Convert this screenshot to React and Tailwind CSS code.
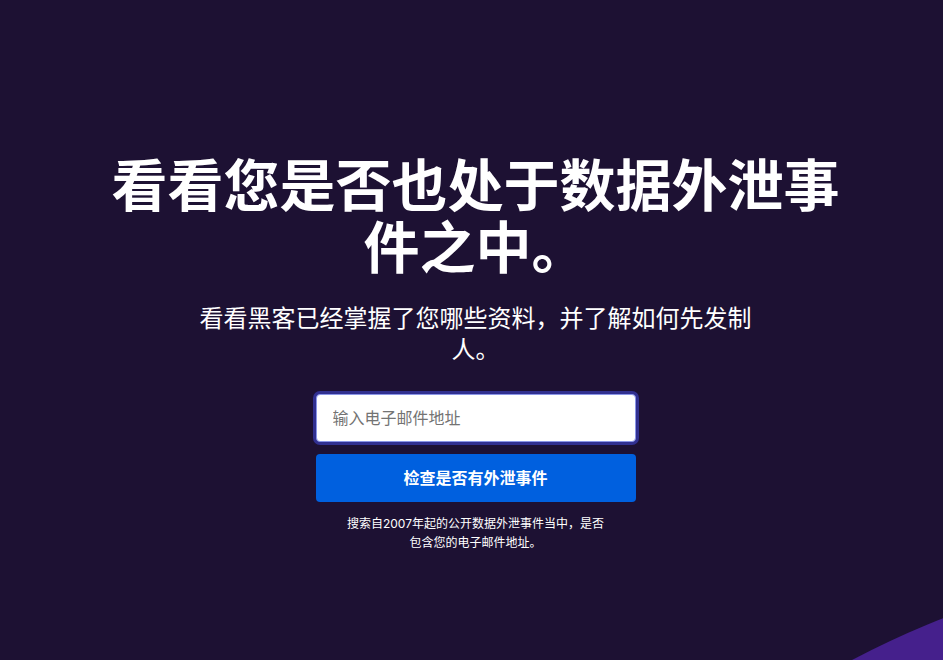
export default function App() {
  return (
    <main className="relative h-[660px] w-full overflow-hidden bg-[#1d1133] font-['Inter','Noto_Sans_CJK_SC',sans-serif] text-white">
      {/* decorative blob bottom-right */}
      <div className="pointer-events-none absolute left-[372px] top-[556px] h-[1800px] w-[1800px] rounded-full bg-[#45208c]" />

      <section className="relative flex flex-col items-center pl-5 pr-3 pt-[155px]">
        <h1 className="max-w-[760px] text-center text-[56px] font-bold leading-[62px]">
          看看您是否也处于数据外泄事件之中。
        </h1>
        <p className="mt-[24px] max-w-[565px] text-center text-[24px] leading-[31px]">
          看看黑客已经掌握了您哪些资料，并了解如何先发制人。
        </p>

        <form className="mt-[29px] flex w-[320px] flex-col" onSubmit={(e) => e.preventDefault()}>
          <input
            type="email"
            autoFocus
            placeholder="输入电子邮件地址"
            className="h-[48px] w-full rounded-[4px] border border-[#8a95e6] bg-white px-4 text-[16px] text-[#20123a] outline-none ring-[3px] ring-[#313090] placeholder:text-[#737373]"
          />
          <button
            type="submit"
            className="mt-[12px] h-[48px] w-full rounded-[4px] bg-[#0060df] text-[16px] font-bold text-white"
          >
            检查是否有外泄事件
          </button>
          <p className="mx-auto mt-[12px] max-w-[262px] text-center text-[12px] leading-[19px]">
            搜索自2007年起的公开数据外泄事件当中，是否包含您的电子邮件地址。
          </p>
        </form>
      </section>
    </main>
  );
}
